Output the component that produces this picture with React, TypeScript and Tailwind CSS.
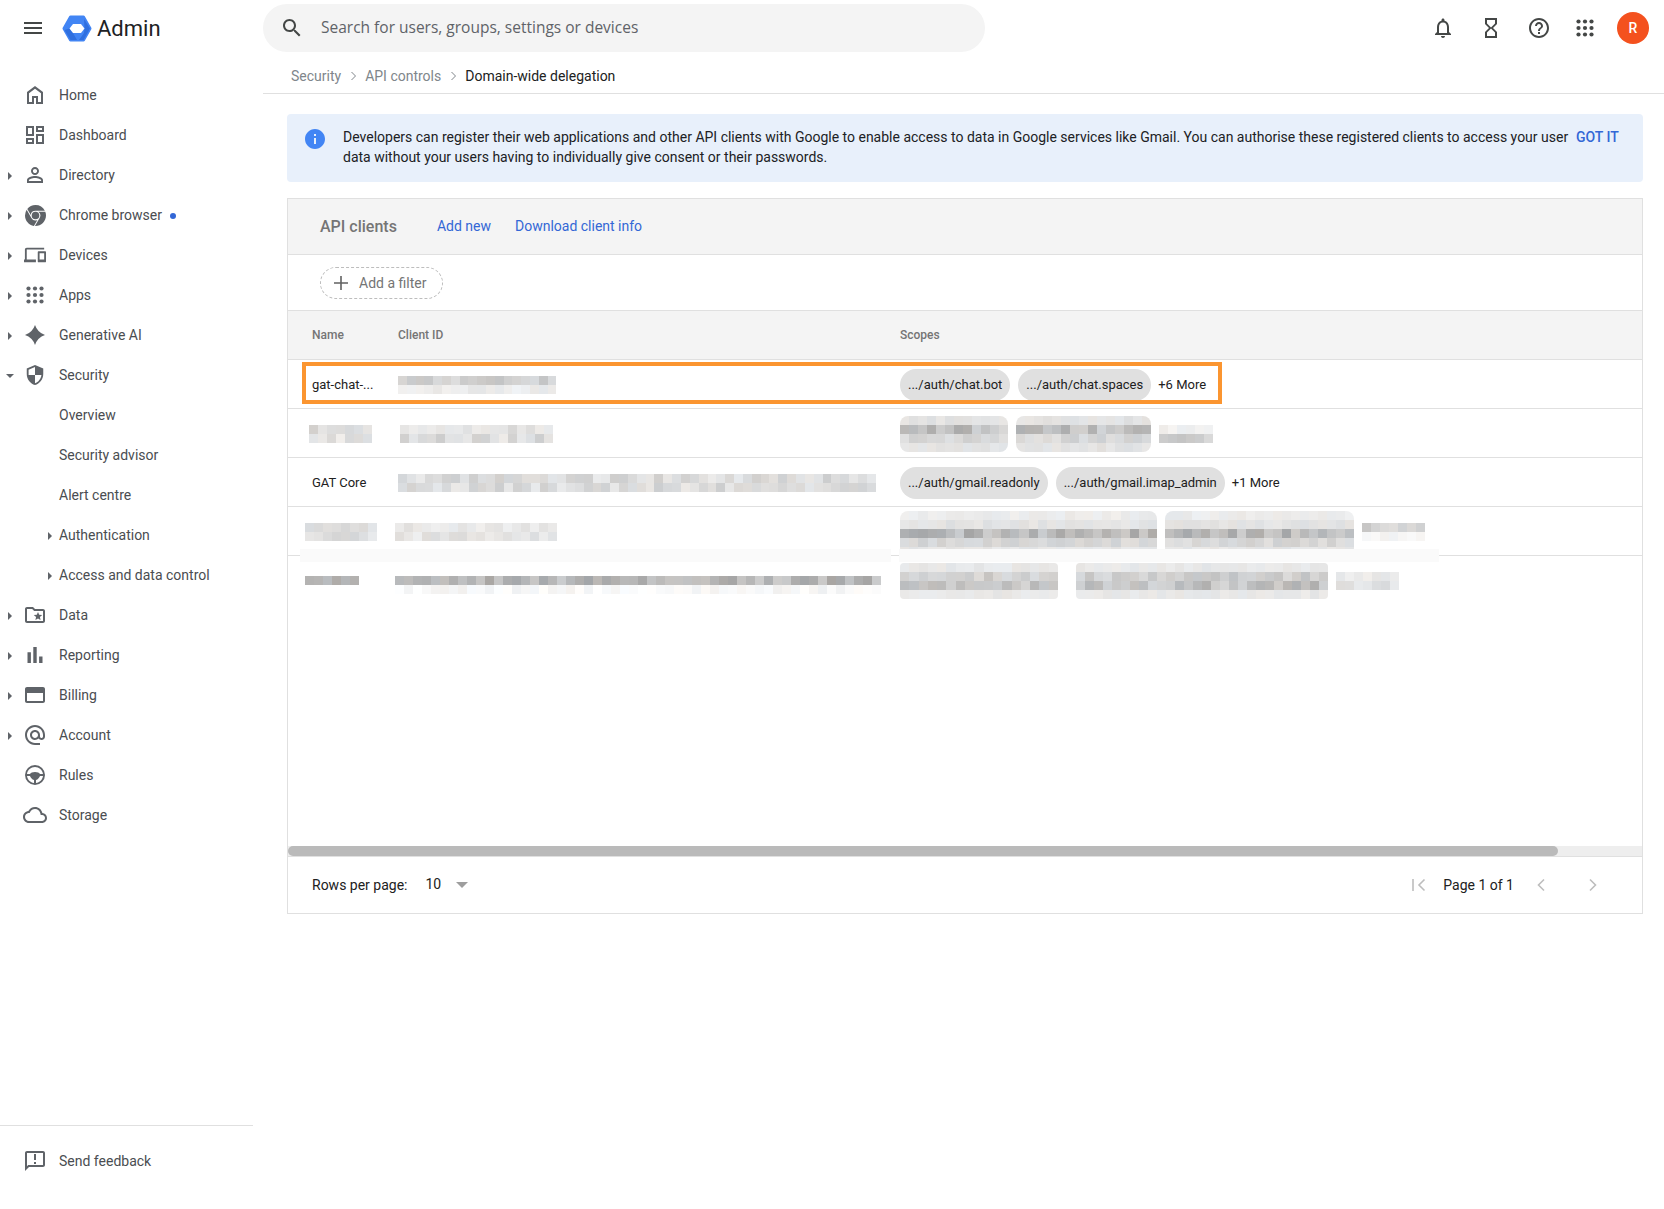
import { SiGooglechrome } from "react-icons/si";

const FONT = "font-['Roboto','Liberation_Sans',sans-serif]";

const paths = {
  home: "M12 3L4 9v12h7v-6h2v6h7V9l-8-6zm6 16h-3v-6H9v6H6v-8.8l6-4.5 6 4.5V19z",
  dashboard:
    "M19 5v2h-4V5h4M9 5v6H5V5h4m10 8v6h-4v-6h4M9 17v2H5v-2h4M21 3h-8v6h8V3zM11 3H3v10h8V3zm10 8h-8v10h8V11zm-10 4H3v6h8v-6z",
  person:
    "M12 5.9c1.16 0 2.1.94 2.1 2.1s-.94 2.1-2.1 2.1S9.9 9.16 9.9 8s.94-2.1 2.1-2.1m0 9c2.97 0 6.1 1.46 6.1 2.1v1.1H5.9V17c0-.64 3.13-2.1 6.1-2.1M12 4C9.79 4 8 5.79 8 8s1.79 4 4 4 4-1.79 4-4-1.79-4-4-4zm0 9c-2.67 0-8 1.34-8 4v3h16v-3c0-2.66-5.33-4-8-4z",
  devices:
    "M3 6h19V4H3c-1.1 0-2 .9-2 2v11H0v3h13v-3H3V6zm20 2h-7c-.55 0-1 .45-1 1v10c0 .55.45 1 1 1h7c.55 0 1-.45 1-1V9c0-.55-.45-1-1-1zm-1 9h-5v-7h5v7z",
  spark: "M12 2Q14.5 9.5 22 12Q14.5 14.5 12 22Q9.5 14.5 2 12Q9.5 9.5 12 2z",
  shield:
    "M12 1L3 5v6c0 5.55 3.84 10.74 9 12 5.16-1.26 9-6.45 9-12V5l-9-4zm0 10.99h7c-.53 4.12-3.28 7.79-7 8.94V12H5V6.3l7-3.11v8.8z",
  folder:
    "M20 6h-8l-2-2H4c-1.1 0-1.99.9-1.99 2L2 18c0 1.1.9 2 2 2h16c1.1 0 2-.9 2-2V8c0-1.1-.9-2-2-2zm0 12H4V6h5.17l2 2H20v10zm-6.92-3.96L12.39 17 15 15.47 17.61 17l-.69-2.96 2.3-1.99-3.03-.26L15 9l-1.19 2.79-3.03.26 2.3 1.99z",
  bars: "M4.5 9.2h3.4V20H4.5zM10.3 4h3.4v16h-3.4zM16.1 13.5h3.4V20h-3.4z",
  card: "M20 4H4c-1.11 0-1.99.89-1.99 2L2 18c0 1.11.89 2 2 2h16c1.11 0 2-.89 2-2V6c0-1.11-.89-2-2-2zm0 14H4v-8h16v8z",
  at: "M12 2C6.48 2 2 6.48 2 12s4.48 10 10 10h5v-2h-5c-4.34 0-8-3.66-8-8s3.66-8 8-8 8 3.66 8 8v1.43c0 .79-.71 1.57-1.5 1.57s-1.5-.78-1.5-1.57V12c0-2.76-2.24-5-5-5s-5 2.24-5 5 2.24 5 5 5c1.38 0 2.64-.56 3.54-1.47.65.89 1.77 1.47 2.96 1.47 1.97 0 3.5-1.6 3.5-3.57V12c0-5.52-4.48-10-10-10zm0 13c-1.66 0-3-1.34-3-3s1.34-3 3-3 3 1.34 3 3-1.34 3-3 3z",
  wheel:
    "M12,2A10,10 0 0,0 2,12A10,10 0 0,0 12,22A10,10 0 0,0 22,12A10,10 0 0,0 12,2M12,4C16.1,4 19.5,7.1 20,11H17C16.5,9.9 14.4,9 12,9C9.6,9 7.5,9.9 7,11H4C4.5,7.1 7.9,4 12,4M4,13H7C7.2,14.3 9.2,16.6 11,17V20C7.4,19.6 4.4,16.6 4,13M13,20V17C14.8,16.6 16.7,14.3 17,13H20C19.6,16.6 16.6,19.6 13,20Z",
  cloud:
    "M19.35 10.04C18.67 6.59 15.64 4 12 4 9.11 4 6.6 5.64 5.35 8.04 2.34 8.36 0 10.91 0 14c0 3.31 2.69 6 6 6h13c2.76 0 5-2.24 5-5 0-2.64-2.05-4.78-4.65-4.96zM19 18H6c-2.21 0-4-1.79-4-4 0-2.05 1.53-3.76 3.56-3.97l1.07-.11.5-.95C8.08 7.14 9.94 6 12 6c2.62 0 4.88 1.86 5.39 4.43l.3 1.5 1.53.11c1.56.1 2.78 1.41 2.78 2.96 0 1.65-1.35 3-3 3z",
  feedback:
    "M20 2H4c-1.1 0-2 .9-2 2v18l4-4h14c1.1 0 2-.9 2-2V4c0-1.1-.9-2-2-2zm0 14H5.17L4 17.17V4h16v12zM11 5h2v6h-2zm0 8h2v2h-2z",
  menu: "M3 18h18v-2H3v2zm0-5h18v-2H3v2zm0-7v2h18V6H3z",
  search:
    "M15.5 14h-.79l-.28-.27C15.41 12.59 16 11.11 16 9.5 16 5.91 13.09 3 9.5 3S3 5.91 3 9.5 5.91 16 9.5 16c1.61 0 3.09-.59 4.23-1.57l.27.28v.79l5 4.99L20.49 19l-4.99-5zm-6 0C7.01 14 5 11.99 5 9.5S7.01 5 9.5 5 14 7.01 14 9.5 11.99 14 9.5 14z",
  bell: "M12 22c1.1 0 2-.9 2-2h-4c0 1.1.9 2 2 2zm6-6v-5c0-3.07-1.63-5.64-4.5-6.32V4c0-.83-.67-1.5-1.5-1.5s-1.5.67-1.5 1.5v.68C7.64 5.36 6 7.92 6 11v5l-2 2v1h16v-1l-2-2zm-2 1H8v-6c0-2.48 1.51-4.5 4-4.5s4 2.02 4 4.5v6z",
  hourglass:
    "M6 2v6h.01L6 8.01 10 12l-4 4 .01.01H6V22h12v-5.99h-.01L18 16l-4-4 4-3.99-.01-.01H18V2H6zm10 14.5V20H8v-3.5l4-4 4 4zm-4-5l-4-4V4h8v3.5l-4 4z",
  help: "M11 18h2v-2h-2v2zm1-16C6.48 2 2 6.48 2 12s4.48 10 10 10 10-4.48 10-10S17.52 2 12 2zm0 18c-4.41 0-8-3.59-8-8s3.59-8 8-8 8 3.59 8 8-3.59 8-8 8zm0-14c-2.21 0-4 1.79-4 4h2c0-1.1.9-2 2-2s2 .9 2 2c0 2-3 1.75-3 5h2c0-2.25 3-2.5 3-5 0-2.21-1.79-4-4-4z",
  info: "M12 2C6.48 2 2 6.48 2 12s4.48 10 10 10 10-4.48 10-10S17.52 2 12 2zm1 15h-2v-6h2v6zm0-8h-2V7h2v2z",
};

function Icon({ d, className }: { d: string; className?: string }) {
  return (
    <svg viewBox="0 0 24 24" fill="currentColor" className={className}>
      <path d={d} />
    </svg>
  );
}

// 3x3 dots, used by the Apps row and the top bar
function Dots({ className }: { className?: string }) {
  const dots = [5.5, 12, 18.5];
  return (
    <svg viewBox="0 0 24 24" fill="currentColor" className={className}>
      {dots.map((y) =>
        dots.map((x) => <circle key={`${x}-${y}`} cx={x} cy={y} r="2.1" />)
      )}
    </svg>
  );
}

function Logo() {
  return (
    <svg viewBox="0 0 30 27" className="h-[27px] w-[30px]">
      <path d="M2 13.5L8.5 2h13L28 13.5 21.5 25h-13z" fill="#4285f4" stroke="#4285f4" strokeWidth="3" strokeLinejoin="round" />
      <path d="M22 4l6 9.5L21.5 25H17l5-7 .5-4.5z" fill="#2f6fdf" />
      <path d="M2.5 15l6 10H15l-4-7-3.5-4.5z" fill="#2f6fdf" />
      <path d="M7.5 13.5L11 9h8l3.5 4.5L19 18h-8z" fill="#fff" />
    </svg>
  );
}

function Arrow({ open }: { open?: boolean }) {
  return open ? (
    <span className="h-0 w-0 border-x-[4px] border-t-[4px] border-x-transparent border-t-[#5f6368]" />
  ) : (
    <span className="h-0 w-0 border-y-[4px] border-l-[4px] border-y-transparent border-l-[#5f6368]" />
  );
}

function NavRow({
  icon,
  label,
  arrow,
  open,
  dot,
}: {
  icon: React.ReactNode;
  label: string;
  arrow?: boolean;
  open?: boolean;
  dot?: boolean;
}) {
  return (
    <div className="flex h-10 items-center">
      <div className="flex w-[20px] justify-center pt-[2px]">{arrow && <Arrow open={open} />}</div>
      <div className="flex w-[30px] justify-center text-[#5f6368]">{icon}</div>
      <span className="ml-[9px] text-[14px] text-[#4a4d51]">{label}</span>
      {dot && <span className="ml-[8px] mt-[1px] h-[6px] w-[6px] rounded-full bg-[#3367d6]" />}
    </div>
  );
}

function SubRow({ label, arrow }: { label: string; arrow?: boolean }) {
  return (
    <div className="flex h-10 items-center">
      <div className="flex w-[59px] justify-end pr-[7px] pt-[2px]">{arrow && <Arrow />}</div>
      <span className="text-[14px] text-[#4a4d51]">{label}</span>
    </div>
  );
}

// blurred out table values: a small seeded grid of grey squares
function Mosaic({
  cols,
  tones,
  seed,
  cellW = 9,
  cellH = 9,
  className,
}: {
  cols: number;
  tones: number[][];
  seed: number;
  cellW?: number;
  cellH?: number;
  className?: string;
}) {
  let s = seed;
  const next = () => {
    s = (s * 9301 + 49297) % 233280;
    return s / 233280;
  };
  return (
    <div className={className}>
      {tones.map((tone, r) => (
        <div key={r} className="flex">
          {Array.from({ length: cols }).map((_, c) => {
            const g = Math.round(tone[0] + next() * (tone[1] - tone[0]));
            const tint = Math.round(next() * 6) - 3;
            return (
              <div
                key={c}
                style={{
                  width: cellW,
                  height: cellH,
                  background: `rgb(${g + tint},${g},${g - tint})`,
                }}
              />
            );
          })}
        </div>
      ))}
    </div>
  );
}

const light = [
  [205, 232],
  [205, 240],
];
const dark = [165, 205];
const chip = [
  [222, 232],
  [170, 215],
  [205, 226],
  [222, 232],
];

function Chip({ label }: { label: string }) {
  return (
    <span className="flex h-[32px] items-center rounded-full bg-[#e0e0e0] px-[8px] text-[13px] text-[#212121]">
      {label}
    </span>
  );
}

function Row({
  name,
  client,
  scopes,
  last,
}: {
  name: React.ReactNode;
  client: React.ReactNode;
  scopes: React.ReactNode;
  last?: boolean;
}) {
  return (
    <div
      className={`grid h-[49px] grid-cols-[110px_502px_1fr] items-center pt-[2px] text-[13px] text-[#212121] ${
        last ? "" : "border-b border-[#e0e0e0]"
      }`}
    >
      <div className="pl-[24px]">{name}</div>
      <div>{client}</div>
      <div className="flex items-center gap-[8px]">{scopes}</div>
    </div>
  );
}

export default function App() {
  return (
    <div className={`flex h-[1209px] w-[1664px] overflow-hidden bg-white ${FONT}`}>
      {/* Sidebar */}
      <aside className="flex w-[263px] shrink-0 flex-col">
        <div className="flex h-[56px] items-center">
          <Icon d={paths.menu} className="ml-[21px] h-6 w-6 text-[#444746]" />
          <div className="ml-[17px] flex">
            <Logo />
          </div>
          <span className="ml-[5px] text-[22px] text-[#202124]">Admin</span>
        </div>
        <nav className="mt-[19px]">
          <NavRow icon={<Icon d={paths.home} className="h-6 w-6" />} label="Home" />
          <NavRow icon={<Icon d={paths.dashboard} className="h-6 w-6" />} label="Dashboard" />
          <NavRow arrow icon={<Icon d={paths.person} className="h-6 w-6" />} label="Directory" />
          <NavRow arrow dot icon={<SiGooglechrome className="h-[21px] w-[21px]" />} label="Chrome browser" />
          <NavRow arrow icon={<Icon d={paths.devices} className="h-[22px] w-[22px]" />} label="Devices" />
          <NavRow arrow icon={<Dots className="h-6 w-6" />} label="Apps" />
          <NavRow arrow icon={<Icon d={paths.spark} className="h-6 w-6" />} label="Generative AI" />
          <NavRow arrow open icon={<Icon d={paths.shield} className="h-[22px] w-[22px]" />} label="Security" />
          <SubRow label="Overview" />
          <SubRow label="Security advisor" />
          <SubRow label="Alert centre" />
          <SubRow arrow label="Authentication" />
          <SubRow arrow label="Access and data control" />
          <NavRow arrow icon={<Icon d={paths.folder} className="h-6 w-6" />} label="Data" />
          <NavRow arrow icon={<Icon d={paths.bars} className="h-6 w-6" />} label="Reporting" />
          <NavRow arrow icon={<Icon d={paths.card} className="h-6 w-6" />} label="Billing" />
          <NavRow arrow icon={<Icon d={paths.at} className="h-6 w-6" />} label="Account" />
          <NavRow icon={<Icon d={paths.wheel} className="h-6 w-6" />} label="Rules" />
          <NavRow icon={<Icon d={paths.cloud} className="h-6 w-6" />} label="Storage" />
        </nav>
        <div className="mt-auto h-[84px] w-[253px] border-t border-[#e0e0e0] pt-[15px]">
          <NavRow icon={<Icon d={paths.feedback} className="h-6 w-6" />} label="Send feedback" />
        </div>
      </aside>

      {/* Main */}
      <main className="flex min-w-0 flex-1 flex-col">
        <header className="flex h-[56px] items-center">
          <div className="flex h-12 w-[722px] items-center rounded-full bg-[#f4f4f4] pl-[17px]">
            <Icon d={paths.search} className="h-6 w-6 text-[#444746]" />
            <span className="ml-[17px] -mt-[1px] font-['Open_Sans',sans-serif] text-[15.5px] text-[#5f6368]">
              Search for users, groups, settings or devices
            </span>
          </div>
          <div className="ml-auto flex items-center pr-[15px]">
            <Icon d={paths.bell} className="h-6 w-6 text-[#444746]" />
            <Icon d={paths.hourglass} className="ml-[24px] h-6 w-6 text-[#444746]" />
            <Icon d={paths.help} className="ml-[24px] h-6 w-6 text-[#444746]" />
            <Dots className="ml-[22px] h-6 w-6 text-[#444746]" />
            <span className="ml-[20px] flex h-8 w-8 items-center justify-center rounded-full bg-[#f4511e] text-[14px] font-medium text-white">
              R
            </span>
          </div>
        </header>

        <div className="flex h-[38px] items-center border-b border-[#e0e0e0] pl-[28px] pt-[3px] text-[14px]">
          <span className="text-[#80868b]">Security</span>
          <svg viewBox="0 0 8 10" className="ml-[9px] h-[10px] w-[8px] text-[#80868b]" fill="none" stroke="currentColor" strokeWidth="1">
            <path d="M1.5 1l4 4-4 4" />
          </svg>
          <span className="ml-[7px] text-[#80868b]">API controls</span>
          <svg viewBox="0 0 8 10" className="ml-[9px] h-[10px] w-[8px] text-[#80868b]" fill="none" stroke="currentColor" strokeWidth="1">
            <path d="M1.5 1l4 4-4 4" />
          </svg>
          <span className="ml-[7px] text-[#212121]">Domain-wide delegation</span>
        </div>

        <div className="flex flex-col pl-[24px] pr-[21px]">
          {/* Info banner */}
          <div className="mt-[20px] flex h-[68px] rounded-[4px] bg-[#e8f0fb] pl-[16px] pt-[13px]">
            <Icon d={paths.info} className="h-6 w-6 text-[#4285f4]" />
            <p className="ml-[16px] w-[1232px] text-[14px] leading-[20px] text-[#202124]">
              Developers can register their web applications and other API clients with Google to enable access to data in Google services like Gmail. You can authorise these registered clients to access your user data without your users having to individually give consent or their passwords.
            </p>
            <span className="ml-[1px] text-[14px] font-medium leading-[20px] text-[#3367d6]">GOT IT</span>
          </div>

          {/* Card */}
          <section className="mt-[16px] flex h-[716px] flex-col border border-[#e0e0e0]">
            <div className="flex h-[56px] items-center border-b border-[#e0e0e0] bg-[#f4f4f4] pl-[32px]">
              <h2 className="text-[16px] font-medium text-[#757575]">API clients</h2>
              <a className="ml-[40px] text-[14px] text-[#3367d6]">Add new</a>
              <a className="ml-[24px] text-[14px] text-[#3367d6]">Download client info</a>
            </div>
            <div className="flex h-[56px] items-center border-b border-[#e0e0e0] pl-[32px]">
              <div className="flex h-[32px] w-[123px] items-center rounded-full border border-dashed border-[#bdbdbd] pl-[12px]">
                <svg viewBox="0 0 16 16" className="h-[16px] w-[16px] text-[#616161]" fill="none" stroke="currentColor" strokeWidth="1.6">
                  <path d="M8 1v14M1 8h14" />
                </svg>
                <span className="ml-[10px] pt-[1px] text-[14px] text-[#757575]">Add a filter</span>
              </div>
            </div>
            <div className="grid h-[49px] grid-cols-[110px_502px_1fr] items-center border-b border-[#e0e0e0] bg-[#f4f4f4] text-[12px] font-medium text-[#757575]">
              <div className="pl-[24px]">Name</div>
              <div>Client ID</div>
              <div>Scopes</div>
            </div>

            <div className="relative h-[486px] shrink-0">
              <Row
                name="gat-chat-..."
                client={<Mosaic seed={11} cols={18} cellW={8.8} tones={[[195, 222], [226, 244]]} />}
                scopes={
                  <>
                    <Chip label=".../auth/chat.bot" />
                    <Chip label=".../auth/chat.spaces" />
                    <span className="ml-[-1px]">+6 More</span>
                  </>
                }
              />
              <Row
                name={<Mosaic seed={23} cols={7} tones={light} className="ml-[-3px]" />}
                client={<Mosaic seed={37} cols={17} tones={[[215, 236], [205, 235]]} className="ml-[2px]" />}
                scopes={
                  <>
                    <Mosaic seed={41} cols={12} tones={chip} className="overflow-hidden rounded-lg" />
                    <Mosaic seed={43} cols={15} tones={chip} className="overflow-hidden rounded-lg" />
                    <Mosaic seed={47} cols={6} tones={[[235, 245], [180, 220]]} />
                  </>
                }
              />
              <Row
                name="GAT Core"
                client={<Mosaic seed={53} cols={54} cellW={8.85} tones={[[205, 235], [205, 235]]} />}
                scopes={
                  <>
                    <Chip label=".../auth/gmail.readonly" />
                    <Chip label=".../auth/gmail.imap_admin" />
                    <span className="ml-[-1px]">+1 More</span>
                  </>
                }
              />
              <Row
                name={<Mosaic seed={59} cols={8} tones={light} className="ml-[-7px]" />}
                client={<Mosaic seed={61} cols={18} tones={[[222, 240], [218, 240]]} className="ml-[-3px]" />}
                scopes={
                  <>
                    <Mosaic
                      seed={67}
                      cols={28}
                      cellW={9.2}
                      tones={[[232, 240], [222, 232], [165, 205], [208, 225], [225, 235]]}
                      className="-mb-[3px] overflow-hidden rounded-lg"
                    />
                    <Mosaic
                      seed={71}
                      cols={21}
                      tones={[[232, 240], [222, 232], [165, 205], [208, 225], [225, 235]]}
                      className="-mb-[3px] overflow-hidden rounded-lg"
                    />
                    <Mosaic seed={73} cols={7} tones={[[195, 222], [240, 250]]} />
                  </>
                }
              />
              <Row
                last
                name={<Mosaic seed={79} cols={6} tones={[dark]} className="mb-[2px] ml-[-7px]" />}
                client={<Mosaic seed={83} cols={54} tones={[dark, [240, 255]]} className="ml-[-3px] mt-[7px]" />}
                scopes={
                  <>
                    <Mosaic
                      seed={89}
                      cols={17}
                      cellW={9.3}
                      tones={[[228, 236], [195, 220], [175, 215], [228, 236]]}
                      className="mb-[2px] overflow-hidden rounded-sm"
                    />
                    <Mosaic
                      seed={97}
                      cols={28}
                      tones={[[228, 236], [195, 220], [175, 215], [228, 236]]}
                      className="mb-[2px] ml-[10px] overflow-hidden rounded-sm"
                    />
                    <Mosaic seed={101} cols={7} tones={[[228, 240], [215, 235]]} className="mb-[2px]" />
                  </>
                }
              />

              {/* selection outline from the screenshot */}
              <div className="absolute left-[14px] top-[2px] h-[42px] w-[920px] border-4 border-[#fb9530]" />
              {/* smudge left by the blur */}
              <div className="absolute left-[12px] top-[189px] h-[13px] w-[591px] bg-[#fafafa]" />
              <div className="absolute left-[611px] top-[189px] h-[13px] w-[540px] bg-[#fafafa]" />
            </div>

            {/* Scrollbar */}
            <div className="h-[11px] shrink-0 border-b border-[#e0e0e0] bg-[#eeeeee]">
              <div className="h-[10px] w-[1270px] rounded-full bg-[#bababa]" />
            </div>

            {/* Footer */}
            <div className="flex flex-1 items-center pl-[24px] text-[14px] text-[#212121]">
              <span>Rows per page:</span>
              <span className="ml-[18px] -mt-[2px]">10</span>
              <span className="ml-[15px] h-0 w-0 border-x-[6px] border-t-[6px] border-x-transparent border-t-[#9e9e9e]" />
              <div className="ml-auto flex items-center">
                <svg viewBox="0 0 14 14" className="-mt-[1px] h-[14px] w-[14px] text-[#bdbdbd]" fill="none" stroke="currentColor" strokeWidth="1.6">
                  <path d="M1 1v12M12.5 1.5L7 7l5.5 5.5" />
                </svg>
                <span className="ml-[17px]">Page 1 of 1</span>
                <svg viewBox="0 0 10 14" className="-mt-[1px] ml-[22px] h-[14px] w-[10px] text-[#bdbdbd]" fill="none" stroke="currentColor" strokeWidth="1.6">
                  <path d="M8 1.5L2.5 7 8 12.5" />
                </svg>
                <svg viewBox="0 0 10 14" className="-mt-[1px] ml-[42px] mr-[44px] h-[14px] w-[10px] text-[#bdbdbd]" fill="none" stroke="currentColor" strokeWidth="1.6">
                  <path d="M2 1.5L7.5 7 2 12.5" />
                </svg>
              </div>
            </div>
          </section>
        </div>
      </main>
    </div>
  );
}
